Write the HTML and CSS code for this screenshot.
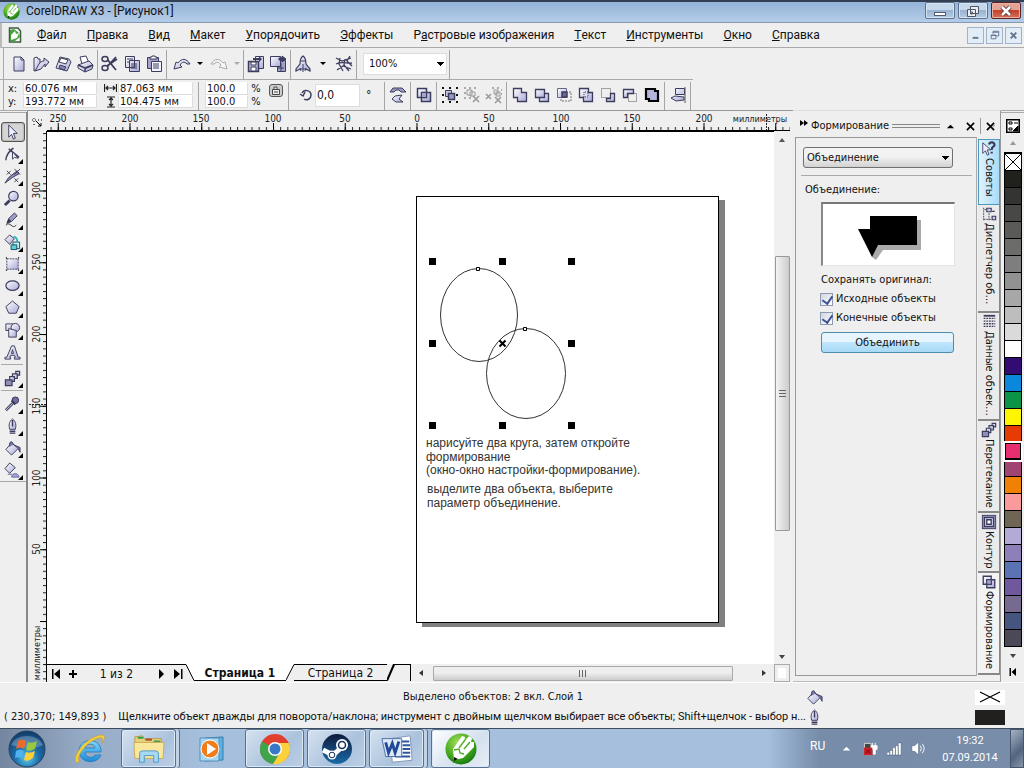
FILE: index.html
```html
<!DOCTYPE html>
<html lang="ru">
<head>
<meta charset="utf-8">
<title>CorelDRAW X3 - [Рисунок1]</title>
<link rel="stylesheet" href="styles.css">
</head>
<body>
<svg class="defs" aria-hidden="true">
  <defs>
    <linearGradient id="g" x1="0" y1="0" x2="1" y2="1"><stop offset="0" stop-color="#fff"/><stop offset="1" stop-color="#a9a9d8"/></linearGradient>
    <radialGradient id="green" cx=".4" cy=".3" r=".8"><stop offset="0" stop-color="#a5e05a"/><stop offset=".6" stop-color="#3fa51c"/><stop offset="1" stop-color="#0d6a0c"/></radialGradient>
    <radialGradient id="orb" cx=".5" cy=".75" r=".75"><stop offset="0" stop-color="#5fd0f2"/><stop offset=".45" stop-color="#1c6ba8"/><stop offset="1" stop-color="#123a66"/></radialGradient>
    <linearGradient id="steamg" x1="0" y1="0" x2="0" y2="1"><stop offset="0" stop-color="#101a3a"/><stop offset="1" stop-color="#1a6ba8"/></linearGradient>
    <linearGradient id="ie" x1="0" y1="0" x2="0" y2="1"><stop offset="0" stop-color="#7fd6fb"/><stop offset="1" stop-color="#1c8ad6"/></linearGradient>
    <symbol id="corel" viewBox="0 0 32 32"><circle cx="16" cy="16" r="15.5" fill="url(#green)"/><path d="M9 27 L8 16 L17 3 L20 4 L19 9 L24 3 L27 5 L26 9 L29 9 L29 14 L18 25 Z" fill="#fff"/><path d="M14 15 L20 7 M19 16 L25 9 M9 17 L14 16 L15 20 L19 21" fill="none" stroke="#4cad28" stroke-width="1.4"/><path d="M9 28 L9 24 L13 26 Z" fill="#111"/></symbol>
    <symbol id="bucket" viewBox="0 0 18 18"><path d="M2 10 L8 3 L15 9 L8 16 Z" fill="url(#g)" stroke="#3c3c5e"/><path d="M6 7 C5 1 9 0 10 5 M10 5 L17 8 L17 13 L15 9" fill="#7777a5" stroke="#3c3c5e"/></symbol>
    <symbol id="pen" viewBox="0 0 18 18"><path d="M9 1 C5 4 5 8 6 12 L12 12 C13 8 13 4 9 1 Z" fill="url(#g)" stroke="#3c3c5e"/><path d="M9 2 V9 M6 14 H12 M6 16 H12" stroke="#3c3c5e" stroke-width="1.5"/></symbol>
    <symbol id="shape2" viewBox="0 0 18 18"><path d="M2.500 2.500 H11.500 V11.500 H2.500 Z M6.500 6.500 H15.500 V15.500 H6.500 Z" fill="url(#g)" stroke="#3c3c5e" stroke-width="1.500"/><path d="M6.500 6.500 H11.500 V11.500 H6.500 Z" fill="#a5a5cd" stroke="#3c3c5e"/></symbol>
    <symbol id="blend" viewBox="0 0 18 18"><g fill="url(#g)" stroke="#3c3c5e" stroke-width="1.300"><path d="M12.500 1.500 h4 v4 h-4 Z"/><path d="M9 4 h5 v5 h-5 Z"/><path d="M6 7 h5 v5 h-5 Z"/><path d="M1.500 10.500 h7 v6 h-7 Z" fill="#8f8fba"/></g></symbol>
  </defs>
</svg>

<header class="title">
  <svg class="logo" viewBox="0 0 16 16"><use href="#corel"/></svg>
  <h1>CorelDRAW X3 - [Рисунок1]</h1>
  <div class="win">
    <button aria-label="Свернуть"><svg viewBox="0 0 28 16"><rect x="8.500" y="9.500" width="11" height="3" fill="#fff" stroke="#565d70"/></svg></button>
    <button aria-label="Восстановить"><svg viewBox="0 0 28 16" fill="#eee" stroke="#4d566b"><path d="M11.500 3.500 h8 v7 h-8 Z M8.500 6.500 h8 v7 h-8 Z M11.500 9 h2 v2 h-2 Z"/></svg></button>
    <button class="close" aria-label="Закрыть"><svg viewBox="0 0 28 16"><path d="M10 4 L18 12 M18 4 L10 12" stroke="#5c3a3a" stroke-width="4.500"/><path d="M10 4 L18 12 M18 4 L10 12" stroke="#fff" stroke-width="2.500"/></svg></button>
  </div>
</header>

<nav class="menu">
  <svg class="docicon" viewBox="0 0 16 16"><path d="M2.500 1 H11 L13.500 4 V15 H2.500 Z" fill="#fff" stroke="#3d5c42" stroke-width="1.500"/><path d="M3 3 L7 2 L12 6 L13 10 L8 14 L3 14 Z" fill="#47a13c"/><path d="M4 13 V8 L8 4 L9 7 L12 6 L10 11 Z" fill="#fff"/></svg>
  <button><u>Ф</u>айл</button><button><u>П</u>равка</button><button><u>В</u>ид</button><button><u>М</u>акет</button><button><u>У</u>порядочить</button><button><u>Э</u>ффекты</button><button>Р<u>а</u>стровые изображения</button><button><u>Т</u>екст</button><button><u>И</u>нструменты</button><button><u>О</u>кно</button><button><u>С</u>правка</button>
  <div class="mdi">
    <button aria-label="Свернуть документ"><svg viewBox="0 0 16 16"><path d="M5 10.500 h6" stroke="#60748e" stroke-width="2"/></svg></button>
    <button aria-label="Восстановить документ"><svg viewBox="0 0 16 16" fill="none" stroke="#60748e"><path d="M6.500 6 v-2.500 h6 v5 h-2.500 M6 4.500 h6 M4.500 7.500 h5 v4 h-5 Z M4 8 h6"/></svg></button>
    <button aria-label="Закрыть документ"><svg viewBox="0 0 16 16"><path d="M5 5 L11 11 M11 5 L5 11" stroke="#60748e" stroke-width="2"/></svg></button>
  </div>
</nav>

<div class="bar tools" role="toolbar" aria-label="Стандартная">
  <button aria-label="Создать"><svg viewBox="0 0 18 18"><path d="M4 2 H11 L14 5 V16 H4 Z M11 2 V5 H14" fill="url(#g)" stroke="#3c3c5e"/></svg></button>
  <button aria-label="Открыть"><svg viewBox="0 0 18 18"><path d="M2 3 L5 2 L6 4 L8 4 V14 L2 16 Z" fill="url(#g)" stroke="#3c3c5e"/><path d="M3 16 L7 9 C8 7 10 6 12 6 V3 L17 7 L13 12 V9 L9 14 Z" fill="url(#g)" stroke="#3c3c5e"/></svg></button>
  <button aria-label="Сохранить"><svg viewBox="0 0 18 18"><path d="M6 2 L15 4 L17 7 L13 16 L2 13 Z" fill="url(#g)" stroke="#3c3c5e"/><path d="M7 3 L14 5 L12 9 L5 7 Z" fill="#fff" stroke="#3c3c5e"/><path d="M6 10 L12 12 L10 15 L5 13 Z" fill="#8787b5" stroke="#3c3c5e"/></svg></button>
  <button aria-label="Печать"><svg viewBox="0 0 18 18"><path d="M4 2 L10 1 L13 8 L6 9 Z" fill="#fff" stroke="#3c3c5e"/><path d="M2 10 L13 6 L17 10 L16 14 L9 17 L2 13 Z" fill="url(#g)" stroke="#3c3c5e"/><path d="M2 10 L9 13 L17 10 M9 13 V17 M10 13 L15 11" fill="none" stroke="#3c3c5e" stroke-width="1.500"/></svg></button>
  <i class="sep"></i>
  <button aria-label="Вырезать"><svg viewBox="0 0 18 18"><path d="M3 15 L15 2 M6 4 L15 15 M16 4 L6 11" stroke="#3c3c5e" stroke-width="1.800" fill="none"/><ellipse cx="4" cy="4" rx="3" ry="2.500" fill="#eee" stroke="#3c3c5e" stroke-width="1.500"/><ellipse cx="4" cy="13" rx="3" ry="2.500" fill="#eee" stroke="#3c3c5e" stroke-width="1.500"/></svg></button>
  <button aria-label="Копировать"><svg viewBox="0 0 18 18"><path d="M2.500 1.500 h9 v11 h-9 Z M6.500 5.500 h10 v11 h-10 Z" fill="url(#g)" stroke="#3c3c5e"/><path d="M4 4 h6 M4 7 h2 M8 9 h6 M8 11 h6 M8 13 h6" stroke="#3c3c5e"/></svg></button>
  <button aria-label="Вставить"><svg viewBox="0 0 18 18"><path d="M2.500 2.500 h11 v11 h-11 Z" fill="#a2a2cc" stroke="#3c3c5e"/><path d="M5 4 V2 h2 V1 h3 v1 h2 v2 Z" fill="#fff" stroke="#3c3c5e"/><path d="M6.500 6.500 h10 v10 h-10 Z" fill="#f4f4ff" stroke="#3c3c5e"/><path d="M8 9 h6 M8 11 h6 M8 13 h6" stroke="#3c3c5e"/></svg></button>
  <i class="sep"></i>
  <button class="wide" aria-label="Отменить"><svg viewBox="0 0 18 18"><path d="M1 14 L3 7 L5 8 C9 3 13 3 17 9 L14 9 C11 6 9 7 7 10 L9 12 Z" fill="url(#g)" stroke="#3c3c5e"/></svg></button>
  <button class="caret" aria-label="Список отмены"></button>
  <button class="wide" disabled aria-label="Вернуть"><svg viewBox="0 0 18 18"><path d="M17 14 L15 7 L13 8 C9 3 5 3 1 9 L4 9 C7 6 9 7 11 10 L9 12 Z" fill="#f6f6f6" stroke="#aaa"/></svg></button>
  <button class="caret off" disabled aria-label="Список возврата"></button>
  <i class="sep"></i>
  <button aria-label="Импорт"><svg viewBox="0 0 18 18"><path d="M8.500 1.500 h8 v12 h-8 Z" fill="url(#g)" stroke="#3c3c5e"/><path d="M1.500 6.500 h10 v10 h-10 Z" fill="#b4b4d8" stroke="#3c3c5e" stroke-width="1.500"/><path d="M4 7 h5 v3 h-5 Z M4 12 h5 v4 h-5 Z" fill="#fff" stroke="#3c3c5e"/><path d="M6 3 h6 v-2 l3 3 l-3 3 v-2 h-6 Z" fill="#3c3c5e"/></svg></button>
  <button aria-label="Экспорт"><svg viewBox="0 0 18 18"><path d="M8.500 5.500 h8 v11 h-8 Z" fill="#a2a2cc" stroke="#3c3c5e"/><path d="M1.500 1.500 h10 v10 h-10 Z" fill="url(#g)" stroke="#3c3c5e"/><path d="M10 3 h3 v-2 l4 3 l-4 3 v-2 h-3 Z M9 13 h6 M12 8 v8" fill="#3c3c5e" stroke="#3c3c5e"/></svg></button>
  <i class="sep"></i>
  <button aria-label="Запуск приложений"><svg viewBox="0 0 18 18"><path d="M9 1 C6 3 6 6 6 9 L2 14 V16 L6 14 H12 L16 16 V14 L12 9 C12 6 12 3 9 1 Z" fill="url(#g)" stroke="#3c3c5e" stroke-width="1.200"/><path d="M9 9 V17 M7 6 h4 M6 13 L7 16 M12 13 L11 16" stroke="#3c3c5e"/></svg></button>
  <button class="caret roomy" aria-label="Список приложений"></button>
  <button aria-label="Сообщество Corel"><svg viewBox="0 0 18 18"><path d="M1 3 L7 6 L16 3 M1 9 C7 6 12 9 17 8 M2 15 L8 11 L16 14 M5 3 L4 9 L8 16 M10 4 L9 10 L14 16 M15 1 L12 6 L17 11" fill="none" stroke="#3c3c5e" stroke-width="1.300"/></svg></button>
  <i class="sep"></i>
  <select class="zoom" aria-label="Масштаб"><option>100%</option></select>
  <i class="sep"></i>
</div>

<div class="bar props" role="toolbar" aria-label="Свойства">
  <div class="pair p1"><label for="px">x:</label><input id="px" value="60.076 мм"><label for="py">y:</label><input id="py" value="193.772 мм"></div>
  <div class="pair p2">
    <label for="pw" aria-label="Ширина"><svg viewBox="0 0 13 12"><path d="M.5 1 V9 M12.500 1 V9 M2 5 H11 M4 3 L2 5 L4 7 M9 3 L11 5 L9 7" fill="none" stroke="#222" stroke-width="1.200"/></svg></label><input id="pw" value="87.063 мм">
    <label for="ph" aria-label="Высота"><svg viewBox="0 0 13 12"><path d="M3 1 H11 M3 11 H11 M7 2 V10 M5 4 L7 2 L9 4 M5 8 L7 10 L9 8" fill="none" stroke="#222" stroke-width="1.200"/></svg></label><input id="ph" value="104.475 мм">
  </div>
  <i class="sep"></i>
  <div class="pair p3"><input id="sx" aria-label="Масштаб по x" value="100.0"><label for="sx">%</label><input id="sy" aria-label="Масштаб по y" value="100.0"><label for="sy">%</label></div>
  <button class="lock" aria-label="Сохранять пропорции"><svg viewBox="0 0 14 13"><rect x=".5" y=".5" width="13" height="12" rx="2.500" fill="#ccc" stroke="#555"/><path d="M3.500 5.500 h7 v5 h-7 Z M5 5 V3 H8 V5 M5 8 h4" fill="#eee" stroke="#444"/></svg></button>
  <i class="sep"></i>
  <div class="rot"><label for="pr" aria-label="Угол поворота"><svg viewBox="0 0 14 14"><path d="M3 5 C5 1 12 2 12 7 C12 11 8 13 5 11 M1 6 L4 8 L6 4" fill="none" stroke="#3c3c5e" stroke-width="1.500"/></svg></label><input id="pr" value="0,0"><span>°</span></div>
  <i class="sep"></i>
  <button aria-label="Отразить"><svg viewBox="0 0 18 18"><path d="M1 6 L4 2 H13 L17 6 H12 L10 4 H7 L5 6 Z" fill="#9a9ac2" stroke="#3c3c5e"/><path d="M13 9 L6 10 L3 13 L7 16 H14 L10 13 Z" fill="url(#g)" stroke="#3c3c5e"/></svg></button>
  <i class="sep"></i>
  <button aria-label="Комбинировать"><svg viewBox="0 0 18 18"><use href="#shape2"/></svg></button>
  <i class="sep"></i>
  <button aria-label="Группа"><svg viewBox="0 0 18 18"><path d="M1 2 h2 M8 2 h2 M15 2 h2 M1 9 h2 M15 9 h2 M1 16 h2 M8 16 h2 M15 16 h2" stroke="#111" stroke-width="2"/><path d="M4.500 4.500 h6 v6 h-6 Z" fill="#c5c5e2" stroke="#3c3c5e"/><path d="M7.500 7.500 h6 v6 h-6 Z" fill="#9a9ac2" stroke="#3c3c5e" stroke-width="1.500"/></svg></button>
  <button disabled aria-label="Разгруппировать"><svg viewBox="0 0 18 18"><path d="M1 2 h2 M6 2 h2 M11 2 h2 M1 7 h2 M1 12 h2 M6 12 h2" stroke="#aaa" stroke-width="2"/><path d="M4 4 h5 v5 h-5 Z M7 6 h5 v4 h-5 Z" fill="none" stroke="#999"/><path d="M10 10 L16 16 M16 10 L10 16" stroke="#999" stroke-width="1.500"/></svg></button>
  <button disabled aria-label="Разгруппировать все"><svg viewBox="0 0 18 18"><path d="M7 2 h2 M12 2 h2 M16 4 h1 M16 8 h1" stroke="#aaa" stroke-width="2"/><path d="M9 4 h4 v4 h-4 Z M11 6 h4 v4 h-4 Z" fill="none" stroke="#999"/><path d="M1 8 L6 13 M6 8 L1 13 M10 11 L16 17 M16 11 L10 17" stroke="#999" stroke-width="1.500"/></svg></button>
  <i class="sep"></i>
  <button aria-label="Объединение"><svg viewBox="0 0 18 18"><path d="M2.500 2.500 H10.500 V6.500 H15.500 V15.500 H6.500 V11.500 H2.500 Z" fill="url(#g)" stroke="#3c3c5e" stroke-width="1.300"/></svg></button>
  <button aria-label="Исключение"><svg viewBox="0 0 18 18"><path d="M6.500 7.500 H15.500 V15.500 H6.500 Z" fill="url(#g)" stroke="#3c3c5e" stroke-width="1.300"/><path d="M2.500 3.500 H11.500 V11.500 H2.500 Z" fill="url(#g)" stroke="#3c3c5e" stroke-width="1.300"/></svg></button>
  <button aria-label="Пересечение"><svg viewBox="0 0 18 18"><path d="M2.500 2.500 h9 v9 h-9 Z" fill="url(#g)" stroke="#66668c"/><path d="M7 6 h5 v5 h-5 Z" fill="#6666a2" stroke="#3c3c5e" stroke-width="1.500"/><path d="M14 6 h2 v9 h-10 v-2" fill="none" stroke="#777" stroke-dasharray="2 1"/></svg></button>
  <button aria-label="Упрощение"><svg viewBox="0 0 18 18"><path d="M2.500 2.500 H11.500 V6.500 H15.500 V15.500 H6.500 V11.500 H2.500 Z" fill="url(#g)" stroke="#3c3c5e" stroke-width="1.300"/><path d="M7 11 V6 H11 V11 Z" fill="#ddddf4" stroke="#3c3c5e" stroke-dasharray="1 1"/></svg></button>
  <button aria-label="Передние минус задние"><svg viewBox="0 0 18 18"><path d="M2.500 2.500 h9 v9 h-9 Z" fill="none" stroke="#555" stroke-dasharray="1 1"/><path d="M11.500 7.500 H15.500 V15.500 H7.500 V12.500 H11.500 Z" fill="url(#g)" stroke="#3c3c5e" stroke-width="1.300"/></svg></button>
  <button aria-label="Задние минус передние"><svg viewBox="0 0 18 18"><path d="M7.500 7.500 h8 v8 h-8 Z" fill="none" stroke="#555" stroke-dasharray="1 1"/><path d="M2.500 3.500 H12.500 V7.500 H6.500 V11.500 H2.500 Z" fill="url(#g)" stroke="#3c3c5e" stroke-width="1.300"/></svg></button>
  <button aria-label="Граница"><svg viewBox="0 0 18 18"><path d="M3 3 H12 V5 H15 V15 H6 V13 H3 Z" fill="#b4b4da" stroke="#000" stroke-width="2.200"/></svg></button>
  <i class="sep"></i>
  <button aria-label="Выровнять"><svg viewBox="0 0 18 18"><path d="M6.500 2.500 h9 v6 h-9 Z M2 12 L6 10 L15 11 L15 14 L7 15 Z" fill="url(#g)" stroke="#3c3c5e"/><path d="M16 1 V17" stroke="#555"/></svg></button>
  <i class="sep"></i>
</div>

<main class="work">
  <aside class="box" aria-label="Инструменты">
    <button class="on" aria-label="Указатель"><svg viewBox="0 0 18 18"><path d="M5 1 V14 L8 11 L10 16 L12 15 L10 10 L14 10 Z" fill="#eef" stroke="#3c3c5e"/></svg></button>
    <button class="fly" aria-label="Форма"><svg viewBox="0 0 18 18"><path d="M2 15 C2 8 7 5 10 2 M5 3 L16 12" fill="none" stroke="#3c3c5e" stroke-width="1.500"/><path d="M9 6 V14 L11 12 L15 13 Z" fill="#eef" stroke="#3c3c5e"/></svg></button>
    <button class="fly" aria-label="Обрезка"><svg viewBox="0 0 18 18"><path d="M1 16 L5 10 L14 3 L16 6 L9 10 Z" fill="#8a8ab0" stroke="#3c3c5e"/><path d="M3 3 L7 7 M7 3 L3 7 M11 1 L17 7 M17 1 L11 7 M11 11 L15 15 M15 11 L11 15" stroke="#3c3c5e"/></svg></button>
    <button class="fly" aria-label="Масштаб"><svg viewBox="0 0 18 18"><path d="M1 16 L6 11" stroke="#3c3c5e" stroke-width="3"/><circle cx="10" cy="6.500" r="5" fill="url(#g)" stroke="#3c3c5e" stroke-width="1.300"/></svg></button>
    <button class="fly" aria-label="Кривая"><svg viewBox="0 0 18 18"><path d="M3 12 L5 7 L11 1 L14 4 L8 10 Z" fill="#9c9cc4" stroke="#3c3c5e"/><path d="M3 12 L5 7 L8 10 Z" fill="#33334e"/><path d="M2 14 C7 9 8 19 13 14" fill="none" stroke="#333"/></svg></button>
    <button class="fly" aria-label="Интеллектуальная заливка"><svg viewBox="0 0 18 18"><path d="M1 6 L6 1 L11 5 L6 11 Z" fill="url(#g)" stroke="#3c3c5e"/><path d="M10 3 Q14 3 14 8" fill="none" stroke="#2cb7bd" stroke-width="2"/><path d="M9.500 8.500 h7 v7 h-7 Z" fill="#bfeeee" stroke="#184e60"/><path d="M7.500 11.500 h6 v5 h-6 Z" fill="#5cd0d4" stroke="#184e60"/></svg></button>
    <button class="fly" aria-label="Прямоугольник"><svg viewBox="0 0 18 18"><path d="M3 3 h12 v11 h-12 Z" fill="url(#g)" stroke="#3c3c5e" stroke-dasharray="2 1"/><path d="M2 2 h1 M15 2 h1 M2 15 h1 M15 15 h1" stroke="#222" stroke-width="2"/></svg></button>
    <button class="fly" aria-label="Эллипс"><svg viewBox="0 0 18 18"><ellipse cx="9" cy="8" rx="7" ry="5" fill="url(#g)" stroke="#3c3c5e" stroke-width="1.300"/></svg></button>
    <button class="fly" aria-label="Многоугольник"><svg viewBox="0 0 18 18"><path d="M9 1 L16 7 L13 14 H5 L2 7 Z" fill="url(#g)" stroke="#3c3c5e"/></svg></button>
    <button class="fly" aria-label="Основные фигуры"><svg viewBox="0 0 18 18"><path d="M2 2 H10 V9 H2 Z" fill="url(#g)" stroke="#3c3c5e"/><circle cx="12" cy="6" r="4.500" fill="url(#g)" stroke="#3c3c5e"/><path d="M5 7 L13 9 V16 H5 Z" fill="url(#g)" stroke="#3c3c5e"/></svg></button>
    <button aria-label="Текст"><svg viewBox="0 0 18 18"><path d="M8 2 H11 L15 14 H17 V16 H11 V14 H12 L11 12 H7 L6 14 H7 V16 H1 V14 H3 Z M9 6 L8 10 H10 Z" fill="url(#g)" stroke="#3c3c5e"/></svg></button>
    <hr>
    <button class="fly" aria-label="Перетекание"><svg viewBox="0 0 18 18"><use href="#blend"/></svg></button>
    <hr>
    <button class="fly" aria-label="Пипетка"><svg viewBox="0 0 18 18"><path d="M2 15 L9 8" stroke="#4b4b73" stroke-width="3"/><path d="M2 15 L9 8" stroke="#ccc"/><circle cx="12" cy="4.500" r="3.500" fill="#6e6e9c" stroke="#333358"/><path d="M8 5 L12 9" stroke="#333358" stroke-width="2"/></svg></button>
    <button class="fly" aria-label="Абрис"><svg viewBox="0 0 18 18"><use href="#pen"/></svg></button>
    <button class="fly" aria-label="Заливка"><svg viewBox="0 0 18 18"><use href="#bucket"/></svg></button>
    <button class="fly" aria-label="Интерактивная заливка"><svg viewBox="0 0 18 18"><path d="M1 7 L6 1 L12 6 L6 12 Z" fill="url(#g)" stroke="#3c3c5e"/><path d="M4 13 H9 M8 16 C9 11 15 11 16 16 Z" fill="#a2a2d6" stroke="#66669c"/></svg></button>
    <div class="rest"></div>
  </aside>

  <section class="doc">
    <div class="corner"><svg viewBox="0 0 18 18"><path d="M6 7 V16 M4 9 H16" stroke="#000" stroke-dasharray="1 2"/><path d="M8 10 L13 15 M13 12 V15 H10" fill="none" stroke="#000"/></svg></div>
    <svg class="hr" aria-label="Горизонтальная линейка">
      <defs>
        <pattern id="hm" x="369.500" y="0" width="7.175" height="20" patternUnits="userSpaceOnUse"><path d="M.5 16 V19" stroke="#222"/></pattern>
        <pattern id="hM" x="369.500" y="0" width="71.750" height="20" patternUnits="userSpaceOnUse"><path d="M.5 12 V19" stroke="#000"/></pattern>
      </defs>
      <rect width="100%" height="20" fill="url(#hm)"/><rect width="100%" height="20" fill="url(#hM)"/>
      <g text-anchor="middle"><text x="11" y="11">250</text><text x="83" y="11">200</text><text x="154" y="11">150</text><text x="226" y="11">100</text><text x="298" y="11">50</text><text x="370" y="11">0</text><text x="442" y="11">50</text><text x="514" y="11">100</text><text x="585" y="11">150</text><text x="657" y="11">200</text><text x="713" y="11" class="unit">миллиметры</text></g>
      <path d="M719.500 3 V19" stroke="#222" stroke-dasharray="2 1"/>
    </svg>
    <svg class="vr" aria-label="Вертикальная линейка">
      <defs>
        <pattern id="vm" x="0" y="59.500" width="19" height="7.175" patternUnits="userSpaceOnUse"><path d="M15 .5 H18" stroke="#222"/></pattern>
        <pattern id="vM" x="0" y="59.500" width="19" height="71.750" patternUnits="userSpaceOnUse"><path d="M12 .5 H18" stroke="#000"/></pattern>
      </defs>
      <rect width="19" height="100%" fill="url(#vm)"/><rect width="19" height="100%" fill="url(#vM)"/>
      <path d="M1 273.500 H18" stroke="#222" stroke-dasharray="2 1"/>
      <g text-anchor="middle"><text transform="translate(12 59) rotate(-90)">300</text><text transform="translate(12 131) rotate(-90)">250</text><text transform="translate(12 203) rotate(-90)">200</text><text transform="translate(12 275) rotate(-90)">150</text><text transform="translate(12 347) rotate(-90)">100</text><text transform="translate(12 418) rotate(-90)">50</text><text transform="translate(12 522) rotate(-90)" class="unit">миллиметры</text></g>
    </svg>
    <div class="view">
      <div class="canvasrow">
        <svg class="canvas" aria-label="Рисунок">
          <g transform="translate(-47 -132)">
            <path d="M719 200 H725 V627 H422 V623 H719 Z" fill="#808080"/>
            <rect x="416.500" y="196.500" width="302" height="426" fill="#fff" stroke="#000"/>
            <g fill="none" stroke="#333"><ellipse cx="479" cy="315" rx="38.500" ry="46.500"/><ellipse cx="526" cy="373.500" rx="39.500" ry="45"/></g>
            <path d="M476.500 267.500 h3 v3 h-3 Z M523.500 327.500 h3 v3 h-3 Z" fill="#fff" stroke="#000"/>
            <path d="M429 258h7v7h-7Z M499 258h7v7h-7Z M568 258h7v7h-7Z M429 340h7v7h-7Z M568 340h7v7h-7Z M429 422h7v7h-7Z M499 422h7v7h-7Z M568 422h7v7h-7Z"/>
            <path d="M499.500 340.500 l6 6 m0 -6 l-6 6" stroke="#000" stroke-width="2"/>
            <g class="art"><text x="426" y="447">нарисуйте два круга, затем откройте</text><text x="426" y="461">формирование</text><text x="426" y="474">(окно-окно настройки-формирование).</text><text x="427" y="493">выделите два объекта, выберите</text><text x="427" y="507">параметр объединение.</text></g>
          </g>
        </svg>
        <div class="vs"><span class="up"></span><span class="grow1"></span><span class="thumb"></span><span class="grow2"></span><span class="down"></span></div>
      </div>
      <div class="pages">
        <div class="nav">
          <button aria-label="Первая страница"><svg viewBox="0 0 10 10"><path d="M1 0 h1.500 v10 h-1.500 Z M9 0 V10 L3 5 Z"/></svg></button>
          <button aria-label="Добавить страницу"><svg viewBox="0 0 10 10"><path d="M4 1 h2 v3 h3 v2 h-3 v3 h-2 v-3 h-3 v-2 h3 Z"/></svg></button>
          <span>1 из 2</span>
          <button aria-label="Следующая страница"><svg viewBox="0 0 10 10"><path d="M3 0 V10 L8 5 Z"/></svg></button>
          <button aria-label="Последняя страница"><svg viewBox="0 0 10 10"><path d="M1 0 V10 L7 5 Z M8 0 h1.500 v10 h-1.500 Z"/></svg></button>
        </div>
        <svg class="slant" viewBox="0 0 8 17"><path d="M0 0 H8 V17 Z" fill="#fff"/><path d="M0 .5 L8 16.500" stroke="#000"/></svg>
        <button class="pg cur">Страница 1</button>
        <svg class="slant" viewBox="0 0 8 17"><path d="M0 0 H8 L0 17 Z" fill="#fff"/><path d="M0 16 L8 .5" stroke="#000"/></svg>
        <button class="pg">Страница 2</button>
        <svg class="slant" viewBox="0 0 8 17"><path d="M0 16.500 L7 .5" stroke="#000" stroke-width="2"/><path d="M6 .5 H8" stroke="#000"/></svg>
        <span class="tail"></span>
        <div class="hs"><span class="left"></span><span class="thumb"></span><span class="right"></span></div>
        <span class="navbox"></span>
      </div>
    </div>
  </section>

  <aside class="docker">
    <div class="dhead"><svg viewBox="0 0 9 8"><path d="M0 0 L4 3 L0 6 Z M4 0 L8 3 L4 6 Z"/></svg><h2>Формирование</h2><i class="grip"></i><button aria-label="Свернуть панель"><svg viewBox="0 0 10 10"><path d="M1 7 L5 3 L9 7 Z"/></svg></button><button aria-label="Закрыть панель"><svg viewBox="0 0 10 10"><path d="M1 1 L9 9 M9 1 L1 9" stroke="#000" stroke-width="1.800"/></svg></button><button class="last" aria-label="Закрыть все"><svg viewBox="0 0 10 10"><path d="M1 1 L9 9 M9 1 L1 9" stroke="#000" stroke-width="1.800"/><path d="M7 6 L10 3" stroke="#777"/></svg></button></div>
    <div class="dbody">
      <div class="panel">
        <select class="mode" aria-label="Операция"><option>Объединение</option></select>
        <hr>
        <p class="lab">Объединение:</p>
        <div class="preview"><svg viewBox="0 0 132 62"><path d="M51 16 H98 V46 H60 L53 56 L49 53 Z" fill="#aaa"/><path d="M47 12 H94 V41 H55 L49 53 L35 25 H47 Z"/></svg></div>
        <div class="keep"><p>Сохранять оригинал:</p>
        <label><input type="checkbox" checked>Исходные объекты</label>
        <label><input type="checkbox" checked>Конечные объекты</label></div>
        <button class="go">Объединить</button>
      </div>
      <div class="tabs" role="tablist">
        <button class="hot t1"><svg viewBox="0 0 18 18"><path d="M2 2 V14 L5 11 L7 16 L9 15 L7 10 H11 Z" fill="#eef" stroke="#3c3c5e"/><path d="M9 4 C10 0 16 1 15 5 C14 7 12 6 12 10 M12 12 V14" fill="none" stroke="#3c3c5e" stroke-width="2.500"/></svg>Советы</button>
        <button class="t2"><svg viewBox="0 0 18 18"><path d="M6.500 2.500 h5 v4 h-5 Z M12.500 11.500 h4 v4 h-4 Z M12.500 6 h3" fill="#cce" stroke="#3c3c5e" stroke-width="1.300"/><path d="M3 2 V16 M9 8 V16 M4 4 H6 M3 15 H12" fill="none" stroke="#3c3c5e" stroke-dasharray="2 1"/></svg>Диспетчер об…</button>
        <button class="t3"><svg viewBox="0 0 18 18"><path d="M3 2 H16" stroke="#3c3c5e" stroke-width="2"/><path d="M3 5 H16 M3 8 H16 M3 11 H16 M3 14 H16" stroke="#3c3c5e" stroke-width="1.500" stroke-dasharray="2 1"/></svg>Данные объек…</button>
        <button class="t4"><svg viewBox="0 0 18 18"><use href="#blend"/></svg>Перетекание</button>
        <button class="t5"><svg viewBox="0 0 18 18"><rect x="1.500" y="1.500" width="15" height="15" fill="#8888b2" stroke="#3c3c5e"/><path d="M4 4 h10 v10 h-10 Z" fill="#ddddf4" stroke="#3c3c5e" stroke-width="1.300"/><path d="M6.500 6.500 h5 v5 h-5 Z" fill="#fff" stroke="#3c3c5e" stroke-width="1.500"/></svg>Контур</button>
        <button class="cur t6"><svg viewBox="0 0 18 18"><use href="#shape2"/></svg>Формирование</button>
      </div>
    </div>
  </aside>

  <aside class="palette" aria-label="Палитра">
    <button class="pm" aria-label="Меню палитры"><svg viewBox="0 0 14 14"><path d="M.75 .75 h12.500 v12.500 h-12.500 Z" fill="#fff" stroke="#000" stroke-width="1.500"/><path d="M3 3 h3 v2 h-3 Z M3 9 h3 v2 h-3 Z" fill="none" stroke="#000"/><path d="M8 4 h4 M12 7 V12 H7 Z" stroke="#000"/></svg></button>
    <span class="up"></span>
    <div class="sw">
      <button aria-label="Нет цвета"><svg viewBox="0 0 16 16"><path d="M0 0 L16 16 M16 0 L0 16" stroke="#000"/></svg></button>
      <b></b><b></b><b></b><b></b><b></b><b></b><b></b><b></b><b></b><b></b><b></b><b></b><b></b><b></b><b></b><b></b><b></b><b></b><b></b><b></b><b></b><b></b><b></b><b></b><b></b><b></b><b></b><b></b>
    </div>
    <span class="down"></span>
    <button class="pe" aria-label="Развернуть палитру"><svg viewBox="0 0 10 10"><path d="M1.500 1 h1.500 v8 h-1.500 Z M8 1 V9 L3.500 5 Z"/></svg></button>
  </aside>
</main>

<footer class="status">
  <p class="sel">Выделено объектов: 2 вкл. Слой 1</p>
  <svg class="sic" viewBox="0 0 18 18"><use href="#bucket"/></svg>
  <span class="chip none"><svg viewBox="0 0 30 15"><path d="M5 2 L25 12 M25 2 L5 12" stroke="#000" stroke-width="1.200"/></svg></span>
  <p class="hint"><span>( 230,370; 149,893 )</span><span class="tip">Щелкните объект дважды для поворота/наклона; инструмент с двойным щелчком выбирает все объекты; Shift+щелчок - выбор н...</span></p>
  <svg class="sic" viewBox="0 0 18 18"><use href="#pen"/></svg>
  <span class="chip dark"></span>
</footer>

<div class="task">
  <button class="tb orb" aria-label="Пуск"><svg viewBox="0 0 38 38"><circle cx="19" cy="19" r="18" fill="url(#orb)" stroke="#23425f"/><path d="M3 15 C8 3 30 3 35 15 C25 20 13 18 3 15 Z" fill="#fff" opacity=".25"/><path d="M10 11 Q14 8 18 11 L16 19 Q12 16 8 19 Z" fill="#ec6a2c"/><path d="M20 12 Q24 14 29 11 L27 19 Q22 22 18 20 Z" fill="#96c93e"/><path d="M8 21 Q12 18 16 21 L14 29 Q10 26 7 28 Z" fill="#4db2ee"/><path d="M18 22 Q22 24 27 21 L25 28 Q20 32 16 30 Z" fill="#fbcf3a"/></svg></button>
  <button class="tb ie" aria-label="Internet Explorer"><svg viewBox="0 0 32 32"><path d="M27 19 H11 C11 25 19 26 21 22 H27 C24 31 6 32 5 18 C5 4 28 4 27 19 Z M11 15 H21 C21 10 12 10 11 15 Z" fill="url(#ie)" stroke="#2479b8" stroke-width=".8" fill-rule="evenodd"/><path d="M3 30 C-3 25 10 5 27 2 C32 2 31 6 28 10 C30 5 28 4 25 5 C13 8 2 23 5 28 Z" fill="#f4cf3c" stroke="#c99a1c" stroke-width=".5"/></svg></button>
  <button class="tb app stack" aria-label="Проводник"><svg viewBox="0 0 34 32"><path d="M2 3 L10 2 L12 5 H30 V10 H2 Z" fill="#ead27b" stroke="#b59b4c"/><path d="M5 4 h6 M13 6 h7 M22 8 h7" stroke="#3a9a4c" stroke-width="2"/><path d="M14 6 h6" stroke="#c84432" stroke-width="2"/><path d="M1 9 H33 L32 26 H2 Z" fill="#f9e79d" stroke="#c9ab58"/><path d="M7 30 V21 Q7 18 10 18 H24 Q27 18 27 21 V30 H22 V23 H12 V30 Z" fill="#a5d9f4" stroke="#4c96c4"/></svg></button>
  <button class="tb wmp" aria-label="Проигрыватель"><svg viewBox="0 0 28 28"><path d="M8 3 L26 2 V25 L8 26 Z" fill="#5cb1e4" stroke="#397ba8"/><path d="M3 3 H22 V26 H3 Z" fill="#a6d7f0" stroke="#5491ba"/><circle cx="13" cy="14" r="9" fill="#f07c1c" stroke="#fff"/><path d="M10 8 L19 14 L10 20 Z" fill="#fff"/></svg></button>
  <button class="tb app" aria-label="Chrome"><svg viewBox="0 0 32 32"><circle cx="16" cy="16" r="15" fill="#e2402f"/><path d="M16 16 L3 8.500 A15 15 0 0 0 14 31 L22 19 Z" fill="#3fa44c"/><path d="M16 10 H29.700 A15 15 0 0 1 14 31 L22 18 Z" fill="#fbd23b"/><circle cx="16" cy="16" r="7" fill="#fff"/><circle cx="16" cy="16" r="5.500" fill="#3878c4"/></svg></button>
  <button class="tb app" aria-label="Steam"><svg viewBox="0 0 32 32"><circle cx="16" cy="16" r="15" fill="url(#steamg)"/><path d="M2 17 L12 22 L21 14" stroke="#fff" stroke-width="5" fill="none"/><circle cx="21" cy="12" r="6" fill="#fff"/><circle cx="21" cy="12" r="3.500" fill="#fff" stroke="#14305c" stroke-width="1.500"/><circle cx="11" cy="22" r="4.500" fill="#fff"/><circle cx="11" cy="22" r="2.800" fill="none" stroke="#14305c"/></svg></button>
  <button class="tb app stack" aria-label="Word"><svg viewBox="0 0 34 32"><path d="M10 5 L31 2 L33 28 L12 30 Z" fill="#fff" stroke="#8195b4"/><path d="M22 8 h8 M23 12 h8 M23 16 h8 M23 20 h8 M15 24 h16" stroke="#2c569e" stroke-width="2"/><path d="M1 5 H22 V24 H5 Z" fill="#dfe9f7" stroke="#4a6ca8"/><path d="M5 9 L8 20 L12 10 L15 20 L19 8" fill="none" stroke="#204a96" stroke-width="3"/></svg></button>
  <button class="tb app act" aria-label="CorelDRAW"><svg viewBox="0 0 32 32"><use href="#corel"/></svg></button>
  <div class="tray">
    <span class="lang">RU</span>
    <button aria-label="Скрытые значки"><svg viewBox="0 0 16 16"><path d="M4 10 L8 6 L12 10 Z" fill="#fff"/></svg></button>
    <button aria-label="Питание"><svg viewBox="0 0 16 16"><path d="M1.500 2.500 h7 v12 h-7 Z" fill="#444" stroke="#ddd"/><path d="M9 5 h6 v4 h-2 v5 h-2 v-5 h-2 Z M10 2 v3 M13 2 v3" fill="#fff" stroke="#fff"/><path d="M1 7 h9 v8 h-9 Z" fill="#cf1f27"/><path d="M3 9 l5 4 m0 -4 l-5 4" stroke="#8d1218" stroke-width="1.500"/></svg></button>
    <button aria-label="Сеть"><svg viewBox="0 0 16 16" fill="#fff" stroke="#4c5d75" stroke-width=".5"><path d="M0 12h3v3h-3Z M3 10h3v5h-3Z M6 7h3v8h-3Z M9 5h3v10h-3Z M12 2h3v13h-3Z"/></svg></button>
    <button aria-label="Громкость"><svg viewBox="0 0 16 16"><path d="M1 5 H4 L8 1 V15 L4 11 H1 Z" fill="#fff" stroke="#4c5d75" stroke-width=".5"/><path d="M10 5 Q12 8 10 11 M12 3 Q16 8 12 13" fill="none" stroke="#fff"/></svg></button>
    <time><span>19:32</span><span>07.09.2014</span></time>
  </div>
  <button class="desk" aria-label="Показать рабочий стол"></button>
</div>
</body>
</html>
```
FILE: styles.css
```css
* { box-sizing: border-box; }
body { margin: 0; height: 100vh; display: flex; flex-direction: column; overflow: hidden; background: #efefef; color: #111; font: 11px/14px "DejaVu Sans Condensed", "DejaVu Sans", sans-serif; }
button { border: 0; padding: 0; margin: 0; background: none; color: inherit; font: inherit; display: flex; align-items: center; justify-content: center; }
h1, h2, p { margin: 0; font: inherit; }
svg { display: block; flex: none; }
.defs { position: absolute; width: 0; height: 0; }

.title { height: 23px; flex: none; display: flex; align-items: center; padding: 0 3px; border-top: 2px solid #333f52; border-bottom: 1px solid #8699b0; background: linear-gradient(#95b4d8, #b4cce8); }
.title .logo { width: 17px; height: 17px; margin-bottom: 2px; }
.title h1 { margin: 0 0 3px 6px; font: 12px/16px Roboto, "Open Sans", sans-serif; }
.win { margin-left: auto; display: flex; gap: 3px; align-self: flex-start; }
.win button { width: 30px; height: 17px; border: 1px solid #5e738e; border-radius: 2px; background: linear-gradient(#c6d8eb 45%, #9ab3d0 50%, #b5cce5); box-shadow: inset 0 0 0 1px #d5e3f2; }
.win svg { width: 28px; height: 16px; }
.win .close { border-color: #5c2220; background: linear-gradient(#e5a396 45%, #c4412b 50%, #d6705a); box-shadow: inset 0 0 0 1px #e9b2a6; }

.menu { height: 25px; flex: none; display: flex; align-items: center; padding: 0 2px 0 5px; gap: 20px; border-left: 2px double #bbb; border-bottom: 1px solid #aaa; font: 12px/16px Roboto, "Open Sans", sans-serif; }
.docicon { width: 16px; height: 16px; margin-right: -6px; }
.mdi { margin-left: auto; display: flex; gap: 2px; }
.mdi button { width: 17px; height: 17px; border: 1px solid #9fb4cc; background: #e3edf8; }
.mdi svg { width: 15px; height: 15px; }

.bar { flex: none; height: 31px; display: flex; align-items: stretch; align-self: flex-start; padding-left: 8px; box-shadow: inset 3px 0 0 #efefef, inset 4px 0 0 #aaa; }
.bar > button { width: 22px; }
.bar > button svg { width: 18px; height: 18px; }
.bar .sep { width: 1px; margin: 2px 1px 0; background: #a5a5a5; flex: none; }
.bar > .wide { width: 27px; }
.bar > .caret { width: 10px; }
.caret::after { content: ""; border: 3px solid transparent; border-top-color: #000; border-bottom: 0; }
.caret.off::after { border-top-color: #aaa; }
.bar > .roomy { margin: 0 5px 0 4px; }
input { border: 1px solid #ddd; background: #fff; color: #111; font: inherit; padding: 0 1px; min-width: 0; margin: 0; }
select { appearance: none; color: #111; font: inherit; border-radius: 0; }
.zoom { width: 84px; height: 22px; margin: 5px 1px 0 5px; align-self: flex-start; padding: 0 5px; border: 1px solid #ddd; background: linear-gradient(#000, #000) 74px 9px / 5px 1px no-repeat, linear-gradient(#000, #000) 73px 8px / 7px 1px no-repeat, linear-gradient(#000, #000) 75px 10px / 3px 1px no-repeat, linear-gradient(#000, #000) 76px 11px / 1px 1px no-repeat, #fff; }
.props { border-top: 1px solid #aaa; }
.props .sep { margin-right: 2px; }
.pair { display: grid; grid-template-rows: 13px 13px; align-content: center; align-items: center; }
.pair input { height: 13px; border-top-color: transparent; }
.pair svg { width: 13px; height: 12px; }
.p1 { grid-template-columns: 15px 74px; }
.p2 { grid-template-columns: 14px 75px; padding: 0 4px 0 7px; }
.p3 { grid-template-columns: 43px 16px; padding-left: 4px; }
.p3 label { text-align: center; }
.bar > .lock { width: 23px; padding-bottom: 10px; }
.bar > .lock svg { width: 14px; height: 13px; }
.rot { display: flex; align-items: center; padding: 0 12px 0 8px; font-size: 12px; }
.rot svg { width: 14px; height: 14px; }
.rot input { width: 45px; height: 23px; margin: 0 6px 0 2px; }

.work { flex: 1; min-height: 0; display: flex; }
.box { width: 28px; flex: none; display: flex; flex-direction: column; padding: 9px 3px 0 1px; border-top: 3px double #aaa; border-right: 2px solid #888; }
.box button { position: relative; width: 24px; height: 22px; padding-right: 1px; }
.box svg { width: 17px; height: 17px; }
.box .on { height: 20px; border: 1px solid #555; border-radius: 3px; background: #d6d6d6; box-shadow: inset 0 0 2px #777; margin-bottom: 1px; }
.fly::after { content: ""; position: absolute; right: 2px; bottom: 1px; border-left: 5px solid transparent; border-bottom: 5px solid #000; }
.box hr { width: 100%; margin: 1px 0 2px; border: 0; border-top: 1px solid #aaa; height: 1px; }
.rest { border-top: 1px solid #aaa; margin: 0 -3px 0 -1px; }

.doc { flex: 1; min-width: 0; display: grid; grid-template: 20px 1fr / 19px 1fr; border-top: 1px solid #999; padding-right: 3px; }
.corner svg { width: 18px; height: 18px; }
.hr { width: 100%; height: 20px; border-bottom: 1px solid #000; overflow: hidden; }
.vr { width: 19px; height: 100%; border-right: 1px solid #000; overflow: hidden; }
.doc text { font: 10px "DejaVu Sans Condensed", "DejaVu Sans", sans-serif; fill: #222; }
.doc .unit { font-size: 9px; }
.view { display: flex; flex-direction: column; min-width: 0; min-height: 0; }
.canvasrow { flex: 1; min-height: 0; display: flex; background: #fff; }
.canvas { flex: 1; min-width: 0; height: 100%; border-top: 1px solid #000; }
.doc .art text { font: 12px "Liberation Sans", Arial, sans-serif; fill: #333; }
.vs { width: 16px; flex: none; display: flex; flex-direction: column; align-items: center; background: #f0f0f0; padding: 7px 0 5px; }
.up, .down { width: 0; height: 0; border: 3px solid transparent; flex: none; }
.up { border-top: 0; border-bottom: 4px solid #555; }
.down { border-bottom: 0; border-top: 4px solid #444; }
.left, .right { width: 0; height: 0; border: 3px solid transparent; flex: none; }
.left { border-left: 0; border-right: 4px solid #333; }
.right { border-right: 0; border-left: 4px solid #333; }
.grow1 { flex: 114; }
.grow2 { flex: 124; }
.vs .thumb { flex: 273; width: 15px; border: 1px solid #999; border-radius: 1px; background: repeating-linear-gradient(#666 0 1px, transparent 1px 3px) 50% 50% / 7px 7px no-repeat, linear-gradient(90deg, #f3f3f3, #ccc); }
.pages { height: 18px; flex: none; display: flex; }
.nav { width: 139px; display: flex; align-items: center; border-top: 1px solid #000; }
.nav svg { width: 10px; height: 10px; }
.nav button { width: 17px; }
.nav span { flex: 1; text-align: center; font-size: 12px; }
.slant { width: 8px; height: 17px; }
.pg { height: 17px; width: 93px; border-top: 1px solid #000; border-bottom: 1px solid #000; font-size: 12px; }
.pg.cur { width: 92px; background: #fff; border-top-color: #fff; font-weight: bold; }
.tail { width: 16px; height: 17px; border: solid #000; border-width: 1px 1px 0 0; }
.hs { flex: 1; display: flex; align-items: center; padding: 0 8px; }
.hs .thumb { flex: 1; height: 15px; margin: 0 29px 0 10px; border: 1px solid #aaa; border-radius: 1px; background: repeating-linear-gradient(90deg, #666 0 1px, transparent 1px 3px) 50% 50% / 8px 7px no-repeat, linear-gradient(#eee 45%, #ccc); }
.navbox { width: 16px; border: 1px solid #aaa; padding: 2px; background: #fff; box-shadow: inset 0 0 0 3px #eee; }

.docker { width: 208px; flex: none; display: flex; flex-direction: column; border-top: 1px solid #ddd; border-right: 1px solid #999; padding-bottom: 5px; border-bottom: 1px solid #bbb; }
.dhead { height: 26px; flex: none; display: flex; align-items: center; padding: 4px 0 0 7px; }
.dhead > svg { width: 9px; height: 8px; margin: 0 2px 5px 0; }
.dhead button { width: 20px; height: 16px; }
.dhead button svg { width: 9px; height: 9px; }
.dhead .last { border-left: 1px solid #999; }
.grip { flex: 1; height: 4px; margin-left: 3px; border: solid #888; border-width: 1px 0; }
.dbody { flex: 1; min-height: 0; display: flex; }
.panel { flex: 1; min-width: 0; margin-left: 2px; padding: 9px 4px 0 7px; border: solid #999; border-width: 1px 0 1px 1px; }
.mode { width: 150px; height: 21px; padding: 0 3px; border: 1px solid #707070; border-radius: 3px; background: linear-gradient(#000, #000) 138px 8px / 7px 1px no-repeat, linear-gradient(#000, #000) 139px 9px / 5px 1px no-repeat, linear-gradient(#000, #000) 140px 10px / 3px 1px no-repeat, linear-gradient(#000, #000) 141px 11px / 1px 1px no-repeat, linear-gradient(#f2f2f2 45%, #d2d2d2); }
.panel hr { margin: 7px 0 7px -2px; border: 0; border-top: 1px solid #aaa; }
.lab { padding-left: 2px; }
.preview { width: 134px; height: 64px; margin: 5px 0 0 18px; background: #fff; border: 1px solid #e3e3e3; border-top: 2px solid #777; border-left: 2px solid #888; overflow: hidden; }
.preview svg { width: 132px; height: 62px; }
.keep { margin: 7px 0 0 17px; display: grid; gap: 5px; }
.keep p { padding-left: 1px; }
.keep label { display: flex; align-items: center; gap: 3px; height: 14px; }
.keep input { width: 13px; height: 13px; appearance: none; border: 1px solid #8e9ab0; padding: 0; background: linear-gradient(135deg, #cfd6e0, #fff); position: relative; }
.keep input:checked::after { content: ""; position: absolute; left: 3px; top: 0; width: 5px; height: 8px; border: solid #3e4f94; border-width: 0 2px 2px 0; transform: rotate(35deg); }
.go { width: 133px; height: 21px; margin: 7px 0 0 18px; border: 1px solid #4f8bab; border-radius: 3px; background: linear-gradient(#e6f5fd 48%, #bee6fd 50%, #a8d9f5); }
.tabs { width: 24px; flex: none; padding: 2px 1px 0 1px; display: flex; flex-direction: column; border-left: 1px solid #aaa; }
.tabs button { writing-mode: vertical-rl; width: 22px; justify-content: flex-start; gap: 1px; padding-top: 1px; border: solid #888; border-width: 0 1px 2px 0; font-size: 11px; white-space: nowrap; background: #ebebeb; }
.tabs svg { width: 16px; height: 16px; }
.tabs .hot { background: linear-gradient(90deg, #dff3fd, #a9dcf8); border: 1px solid #4e97bd; }
.tabs .cur { background: #f3f3f3; }
.t1 { height: 66px; }
.t2, .t3 { height: 108px; }
.t4 { height: 92px; }
.t5 { height: 60px; }
.t6 { height: 102px; }

.palette { width: 23px; flex: none; display: flex; flex-direction: column; align-items: center; padding-top: 6px; border-top: 3px double #aaa; }
.pm svg { width: 14px; height: 14px; }
.palette .up { margin: 8px 0 7px; border-bottom-color: #999; }
.sw { display: flex; flex-direction: column; width: 18px; border: 1px solid #000; border-top-width: 2px; border-bottom: 0; }
.sw > * { height: 17px; border-bottom: 1px solid #000; background: #fff; }
.sw svg { width: 16px; height: 16px; }
.sw :nth-child(2) { background: #20201d; }
.sw :nth-child(3) { background: #343432; }
.sw :nth-child(4) { background: #484847; }
.sw :nth-child(5) { background: #5a5a59; }
.sw :nth-child(6) { background: #6c6c6b; }
.sw :nth-child(7) { background: #7e7e7e; }
.sw :nth-child(8) { background: #929292; }
.sw :nth-child(9) { background: #a7a7a7; }
.sw :nth-child(10) { background: #bdbdbd; }
.sw :nth-child(11) { background: #dadada; }
.sw :nth-child(13) { background: #330c73; }
.sw :nth-child(14) { background: #0b87dc; }
.sw :nth-child(15) { background: #0b9447; }
.sw :nth-child(16) { background: #fff500; }
.sw :nth-child(17) { background: #e63b05; }
.sw :nth-child(18) { background: #e62e70; box-shadow: inset 0 0 0 1px #000, 0 0 0 2px #fff; position: relative; }
.sw :nth-child(19) { background: #a04573; }
.sw :nth-child(20) { background: #f08104; }
.sw :nth-child(21) { background: #fb9a9b; }
.sw :nth-child(22) { background: #6f6555; }
.sw :nth-child(23) { background: #b4aad6; }
.sw :nth-child(24) { background: #8f7fb8; }
.sw :nth-child(25) { background: #5c73b3; }
.sw :nth-child(26) { background: #6f599c; }
.sw :nth-child(27) { background: #776a91; }
.sw :nth-child(28) { background: #46557d; }
.sw :nth-child(29) { background: #4b4858; }
.palette .down { margin-top: 7px; }
.pe { margin-top: 9px; }
.pe svg { width: 10px; height: 10px; }

.status { height: 46px; flex: none; display: grid; grid-template: 20px 20px / minmax(0, 1fr) 20px 198px; align-items: center; padding: 4px 0 2px; border-top: 1px solid #fff; }
.sel { text-align: center; padding-left: 180px; }
.hint { padding-left: 4px; display: flex; gap: 12px; white-space: nowrap; }
.tip { font: 11px/14px Roboto, "Open Sans", sans-serif; }
.sic { width: 17px; height: 17px; }
.chip { width: 30px; height: 15px; margin-left: 149px; }
.chip.none { background: #fff; }
.chip.dark { background: #21201e; }

.task { height: 40px; flex: none; display: flex; align-items: stretch; border-top: 1px solid #3c4b5e; background: linear-gradient(90deg, #74869f, #95aac5 8%, #a5bfdc 20%, #a5bfdc 75%, #768ca9 80%, #778daa 98%); }
.tb { height: 39px; }
.orb { width: 54px; }
.orb svg { width: 38px; height: 38px; }
.ie { width: 67px; padding-left: 4px; }
.ie svg { width: 32px; height: 32px; }
.app { width: 59px; margin-right: 3px; border: 1px solid #56708f; border-radius: 3px; background: linear-gradient(135deg, #d5e2f0, #abc2dd 60%, #bccfe5); box-shadow: inset 0 0 0 1px #dce8f4; }
.app svg { height: 32px; width: 32px; }
.stack { width: 55px; margin-right: 7px; box-shadow: inset 0 0 0 1px #dce8f4, 3px 0 0 #c2d3e7, 4px 0 0 #56708f; }
.wmp { width: 62px; padding-right: 6px; }
.wmp svg { width: 28px; height: 28px; }
.app.act { background: linear-gradient(135deg, #fff, #d3e0ee 60%, #e9f0f7); }
.tray { margin-left: auto; display: flex; align-items: center; color: #fff; }
.lang { width: 24px; font: 12px/16px Roboto, "Open Sans", sans-serif; padding-bottom: 5px; }
.tray button { width: 24px; }
.tray svg { width: 15px; height: 15px; }
time { display: flex; flex-direction: column; align-items: center; width: 80px; font: 11px/17px Roboto, "Open Sans", sans-serif; }
.desk { width: 14px; border: 1px solid #46566d; background: linear-gradient(135deg, #a6b3c4, #52657f 60%, #8796aa); }
```
